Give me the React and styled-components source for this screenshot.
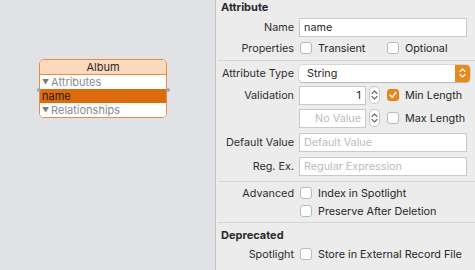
import React from "react";
import styled, { createGlobalStyle } from "styled-components";

const Global = createGlobalStyle`
  html, body { margin: 0; padding: 0; }
  body {
    width: 475px;
    height: 270px;
    overflow: hidden;
    font-family: Inter, "Liberation Sans", sans-serif;
    font-size: 10.8px;
    color: #272727;
  }
`;

function Chevrons({ color = "#6f6f6f" }) {
  return (
    <svg width="7" height="12" viewBox="0 0 7 12">
      <path d="M1 4.5 L3.5 2 L6 4.5" fill="none" stroke={color} strokeWidth="1.2" strokeLinecap="round" strokeLinejoin="round" />
      <path d="M1 7.5 L3.5 10 L6 7.5" fill="none" stroke={color} strokeWidth="1.2" strokeLinecap="round" strokeLinejoin="round" />
    </svg>
  );
}

function Check({ checked }) {
  return (
    <Box $checked={checked}>
      {checked && (
        <svg width="10" height="10" viewBox="0 0 10 10">
          <path d="M2.3 5.3 L4.2 7.2 L7.8 2.6" fill="none" stroke="#fff" strokeWidth="1.6" strokeLinecap="round" strokeLinejoin="round" />
        </svg>
      )}
    </Box>
  );
}

export default function App() {
  return (
    <>
      <Global />
      <Page>
        <Canvas>
          <Entity>
            <Handle $side="left" />
            <Handle $side="right" />
            <EntityHead>Album</EntityHead>
            <EntityRow>
              <Tri>▼</Tri>Attributes
            </EntityRow>
            <EntityRow $selected>name</EntityRow>
            <EntityRow $last>
              <Tri>▼</Tri>Relationships
            </EntityRow>
          </Entity>
        </Canvas>

        <Panel>
          <Title>Attribute</Title>

          <Row $h={21}>
            <Label>Name</Label>
            <Controls>
              <Field>name</Field>
            </Controls>
          </Row>

          <Row $h={20}>
            <Label>Properties</Label>
            <Controls>
              <CheckItem $w={87}>
                <Check />
                Transient
              </CheckItem>
              <CheckItem>
                <Check />
                Optional
              </CheckItem>
            </Controls>
          </Row>

          <Separator $mt={2} />

          <Row $h={20} $mt={2}>
            <Label>Attribute Type</Label>
            <Controls>
              <Popup>
                <span>String</span>
                <PopupArrow>
                  <Chevrons color="#fff" />
                </PopupArrow>
              </Popup>
            </Controls>
          </Row>

          <Row $h={22} $mt={1}>
            <Label>Validation</Label>
            <Controls>
              <Field $w={67} $right>1</Field>
              <Stepper>
                <Chevrons />
              </Stepper>
              <CheckItem>
                <Check checked />
                Min Length
              </CheckItem>
            </Controls>
          </Row>

          <Row $h={22} $mt={1}>
            <span />
            <Controls>
              <Field $w={67} $right $placeholder>No Value</Field>
              <Stepper>
                <Chevrons />
              </Stepper>
              <CheckItem>
                <Check />
                Max Length
              </CheckItem>
            </Controls>
          </Row>

          <Row $h={22} $mt={2}>
            <Label>Default Value</Label>
            <Controls>
              <Field $placeholder>Default Value</Field>
            </Controls>
          </Row>

          <Row $h={22} $mt={2}>
            <Label>Reg. Ex.</Label>
            <Controls>
              <Field $placeholder>Regular Expression</Field>
            </Controls>
          </Row>

          <Separator $mt={4} />

          <Row $h={18} $mt={2}>
            <Label>Advanced</Label>
            <Controls>
              <CheckItem>
                <Check />
                Index in Spotlight
              </CheckItem>
            </Controls>
          </Row>

          <Row $h={18}>
            <span />
            <Controls>
              <CheckItem>
                <Check />
                Preserve After Deletion
              </CheckItem>
            </Controls>
          </Row>

          <Separator $mt={2} />

          <Title $mt={5}>Deprecated</Title>

          <Row $h={18}>
            <Label>Spotlight</Label>
            <Controls>
              <CheckItem>
                <Check />
                Store in External Record File
              </CheckItem>
            </Controls>
          </Row>
        </Panel>
      </Page>
    </>
  );
}

const Page = styled.div`
  display: flex;
  width: 475px;
  height: 270px;
`;

const Canvas = styled.div`
  width: 215px;
  flex-shrink: 0;
  background: #e1e2e6;
  padding: 59px 0 0 39px;
  box-sizing: border-box;
`;

const Entity = styled.div`
  position: relative;
  width: 128px;
  border: 1px solid #e58d45;
  border-radius: 5px;
  background: #fff;
  box-sizing: border-box;
`;

const Handle = styled.div`
  position: absolute;
  top: 28px;
  ${(p) => (p.$side === "left" ? "left: -3px;" : "right: -4px;")}
  width: 4px;
  height: 4px;
  border-radius: 50%;
  background: #a6a7ab;
`;

const EntityHead = styled.div`
  height: 14px;
  line-height: 15px;
  text-align: center;
  background: #fcd9bd;
  border-bottom: 1px solid #e58d45;
  border-radius: 4px 4px 0 0;
  color: #2a2a2a;
  font-size: 11px;
`;

const EntityRow = styled.div`
  height: 14px;
  line-height: 14px;
  padding-left: 2px;
  font-size: 11px;
  color: ${(p) => (p.$selected ? "#2a1a0a" : "#8b8b8b")};
  background: ${(p) => (p.$selected ? "#dc6b0e" : "#fff")};
  border-radius: ${(p) => (p.$last ? "0 0 4px 4px" : "0")};
`;

const Tri = styled.span`
  display: inline-block;
  font-size: 7px;
  color: #7b7b7b;
  margin-right: 2px;
  vertical-align: 1px;
`;

const Panel = styled.div`
  flex: 1;
  background: #ececec;
  border-left: 1px solid #c4c4c4;
  padding: 0 8px 0 5px;
  display: flex;
  flex-direction: column;
`;

const Title = styled.div`
  font-weight: 700;
  font-size: 11px;
  height: 17px;
  line-height: 14px;
  margin-top: ${(p) => p.$mt || 0}px;
  color: #2a2a2a;
`;

const Row = styled.div`
  display: grid;
  grid-template-columns: 73px 1fr;
  column-gap: 5px;
  align-items: center;
  height: ${(p) => p.$h}px;
  margin-top: ${(p) => p.$mt || 0}px;
  flex-shrink: 0;
`;

const Label = styled.div`
  text-align: right;
  color: #2e2e2e;
  white-space: nowrap;
`;

const Controls = styled.div`
  display: flex;
  align-items: center;
  min-width: 0;
`;

const Field = styled.div`
  box-sizing: border-box;
  height: 19px;
  line-height: 17px;
  ${(p) => (p.$w ? `width: ${p.$w}px;` : "flex: 1;")}
  background: #fff;
  border: 1px solid #c9c9c9;
  padding: 0 4px;
  text-align: ${(p) => (p.$right ? "right" : "left")};
  color: ${(p) => (p.$placeholder ? "#bcbcbc" : "#262626")};
  white-space: nowrap;
  overflow: hidden;
`;

const Stepper = styled.div`
  box-sizing: border-box;
  width: 11px;
  height: 18px;
  margin: 0 6px 0 3px;
  border-radius: 5px;
  background: #fff;
  border: 1px solid #c6c6c6;
  display: flex;
  align-items: center;
  justify-content: center;
`;

const CheckItem = styled.div`
  display: flex;
  align-items: center;
  gap: 6px;
  white-space: nowrap;
  ${(p) => p.$w && `width: ${p.$w}px;`}
  padding-left: 1px;
  box-sizing: border-box;
`;

const Box = styled.div`
  box-sizing: border-box;
  width: 12px;
  height: 12px;
  border-radius: 3px;
  flex-shrink: 0;
  display: flex;
  align-items: center;
  justify-content: center;
  background: ${(p) => (p.$checked ? "#e8891e" : "#fff")};
  border: 1px solid ${(p) => (p.$checked ? "#e07f14" : "#b9b9b9")};
`;

const Popup = styled.div`
  flex: 1;
  margin-right: -3px;
  height: 17px;
  border-radius: 4px;
  background: #fff;
  box-shadow: 0 0 0 0.5px rgba(0, 0, 0, 0.18), 0 1px 1px rgba(0, 0, 0, 0.15);
  display: flex;
  align-items: center;
  justify-content: space-between;
  padding-left: 8px;
  overflow: hidden;
`;

const PopupArrow = styled.div`
  width: 15px;
  height: 17px;
  background: #e8891e;
  display: flex;
  align-items: center;
  justify-content: center;
`;

const Separator = styled.div`
  height: 1px;
  background: #d6d6d6;
  margin: ${(p) => p.$mt}px -8px 0 -3px;
  flex-shrink: 0;
`;
